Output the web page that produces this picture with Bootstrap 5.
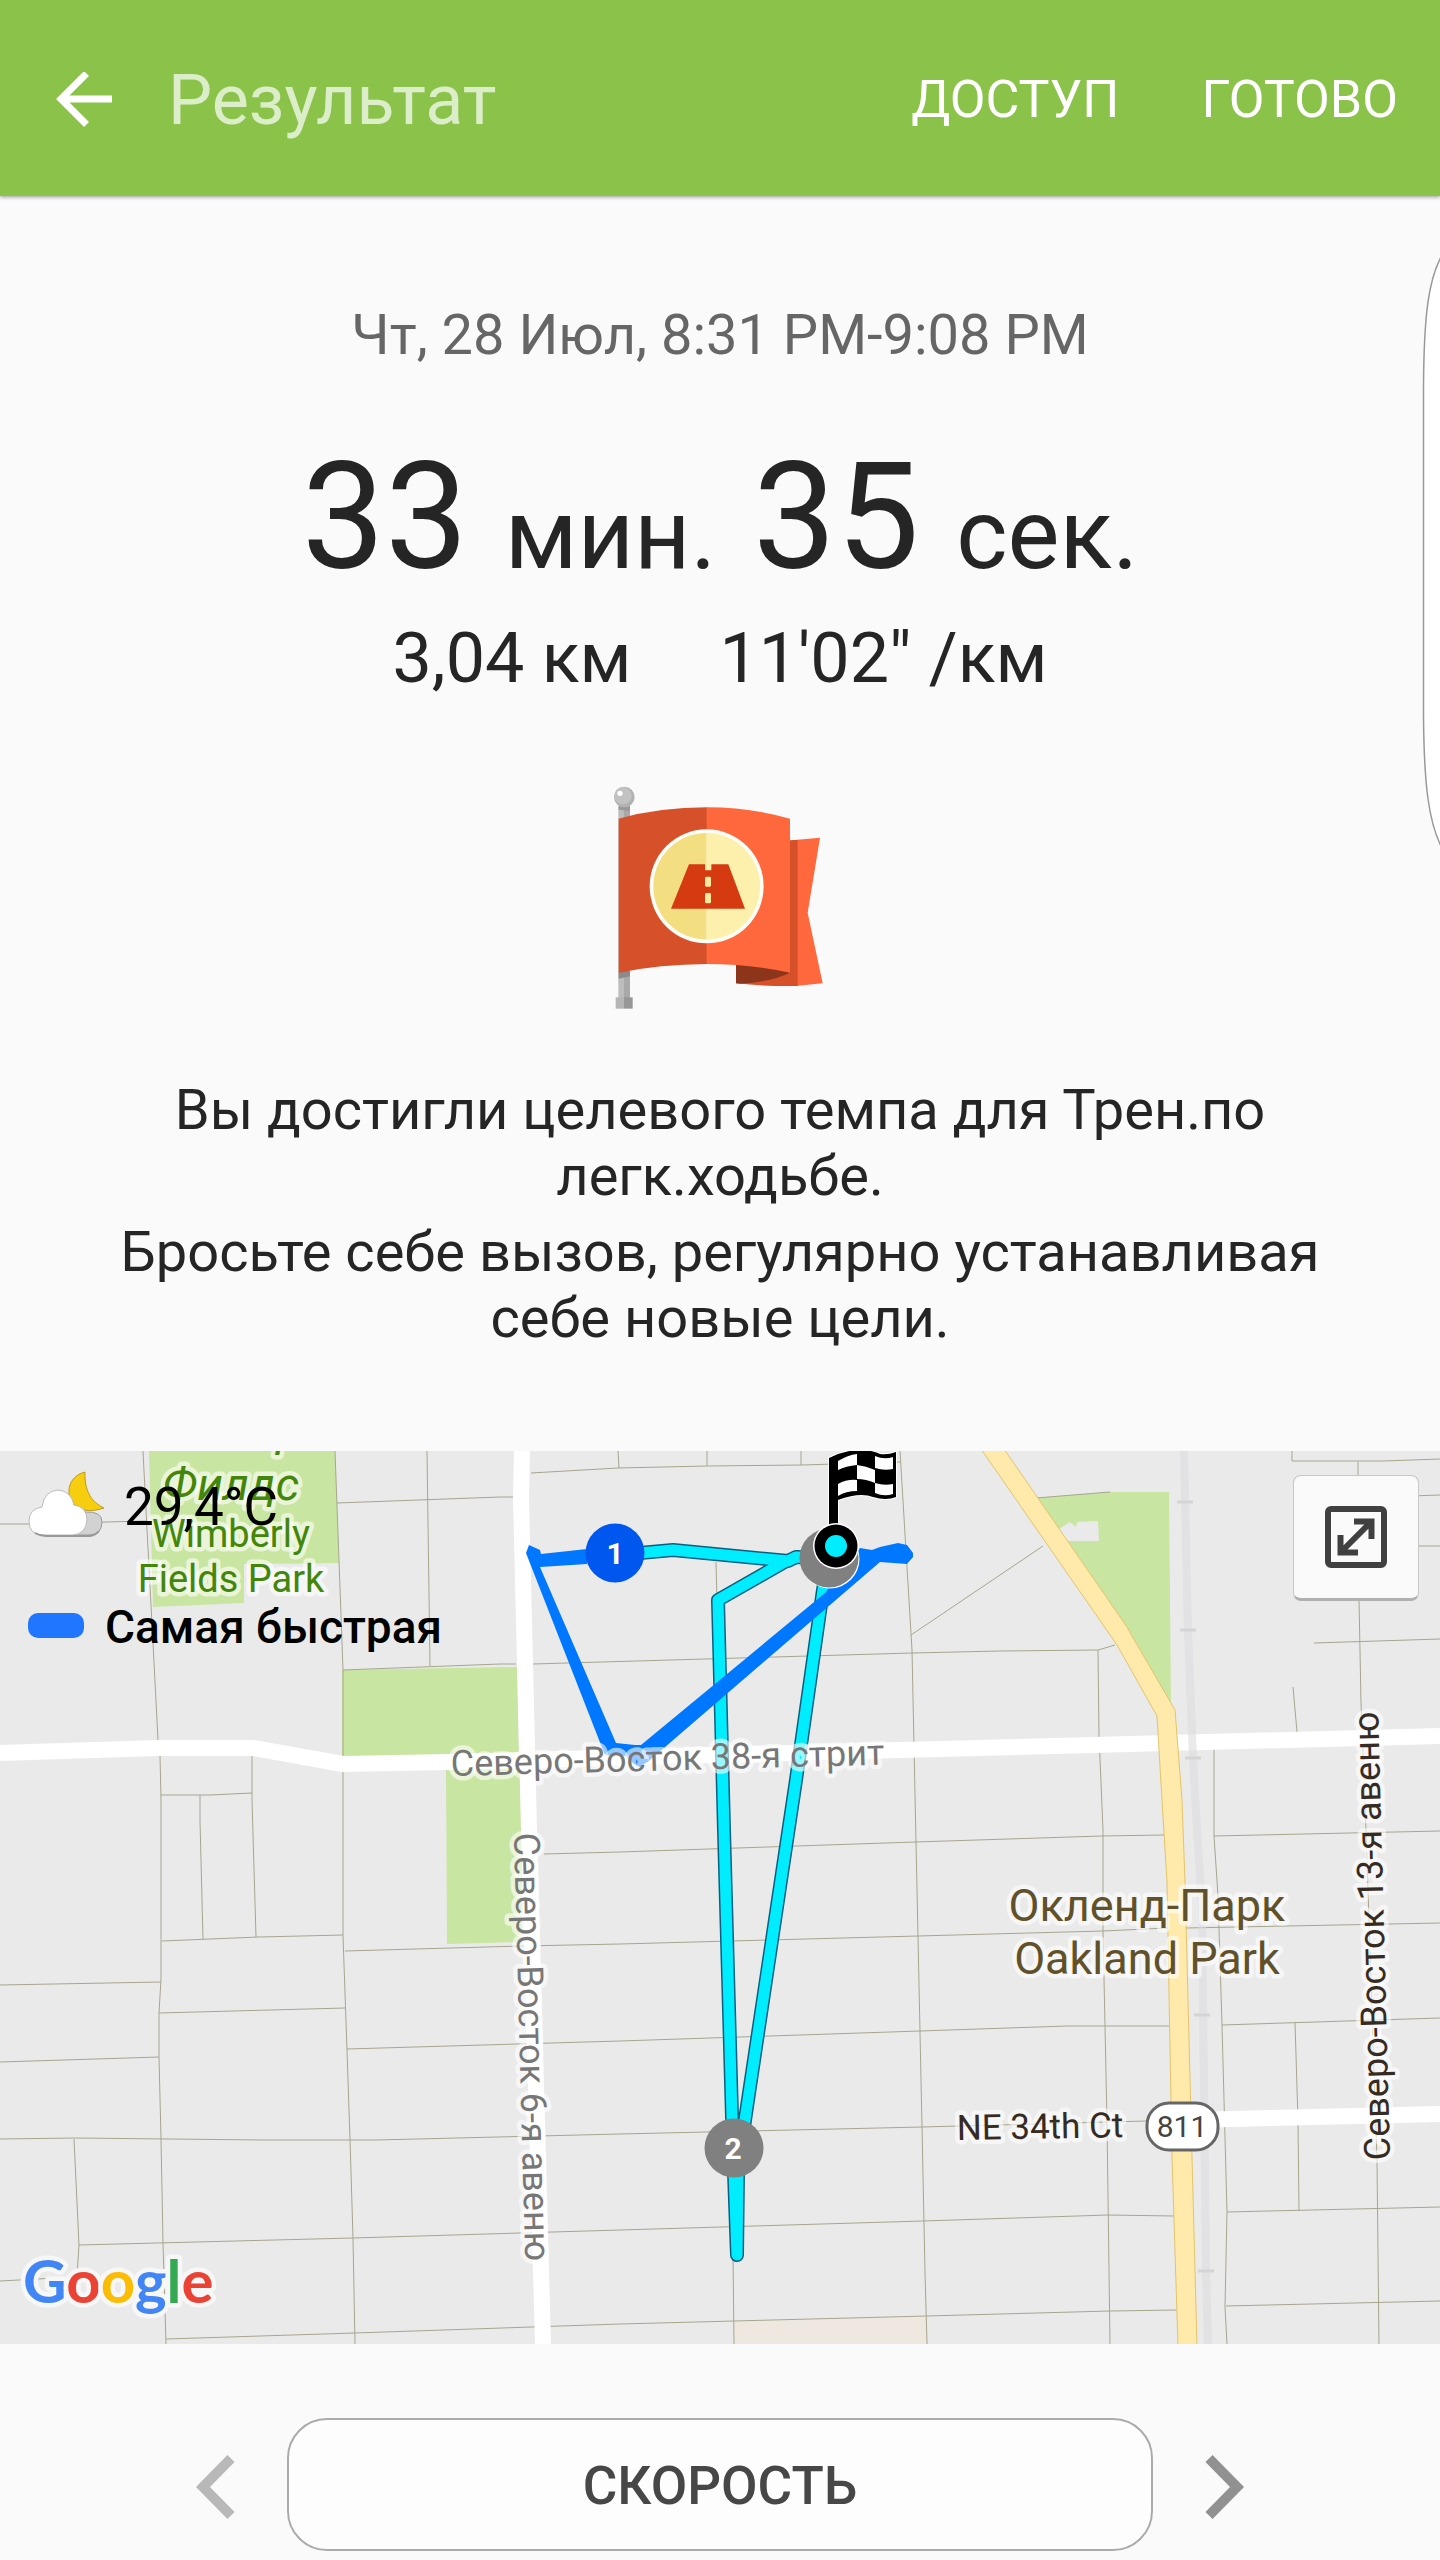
<!DOCTYPE html>
<html lang="ru">
<head>
<meta charset="utf-8">
<meta name="viewport" content="width=device-width, initial-scale=1">
<title>Результат</title>
<link href="https://cdn.jsdelivr.net/npm/bootstrap@5.3.0/dist/css/bootstrap.min.css" rel="stylesheet">
<style>
body{font-family:Roboto,"Noto Sans",sans-serif;background:#fafafa;color:#252525}
.topbar{background:#8bc34a;height:196px;padding:4px 42px 0 56px;box-shadow:0 1px 4px rgba(0,0,0,.4)}
.topbar-title{font-size:70px;line-height:82px;font-weight:400;color:rgba(255,255,255,.7);margin-left:56px}
.topbar-btn{font-size:52px;line-height:62px;color:#fff}
.topbar-actions{gap:82px}
.plain-btn{border:0;background:none;padding:0}
.summary{padding:106px 100px 100px}
.when{font-size:56px;line-height:66px;color:#666}
.duration{font-size:148px;line-height:174px;margin-top:63px;font-weight:400}
.duration .unit{font-size:98px;line-height:100px}
.stats{font-size:70px;line-height:82px;margin-top:12px;gap:88px}
.award{margin-top:84px;margin-bottom:64px}
.message{font-size:56px;line-height:66px}
.message p{margin-bottom:10px}
.message p:last-child{margin-bottom:0}
.edge-handle{top:256px;right:0}
.route-map svg.canvas text{font-family:Roboto,"Noto Sans",sans-serif}
.halo{paint-order:stroke;stroke:rgba(255,255,255,.6);stroke-width:9px;stroke-linejoin:round}
.map-info{top:20px;left:28px;color:#000}
.temp{font-size:53px;line-height:62px;margin-left:18px;padding-top:4px}
.weather{height:68px}
.legend{margin-top:57px;font-size:46px;line-height:54px;font-weight:500}
.legend span:last-child{padding-top:4px}
.swatch{width:56px;height:25px;border-radius:10px;background:#2176ff;margin-right:21px}
.expand{top:24px;right:21px;width:126px;height:126px;background:#fafafa;border:1px solid #c8c8c8;border-bottom:3px solid #b0b0b0;border-radius:8px}
.pager{padding:74px 196px 9px}
.pager .plain-btn{padding-top:5px}
.metric{height:133px;margin:0 52px;padding:5px 0 0;border:2px solid #ababab;border-radius:40px;background:#fdfdfd;font-size:53px;font-weight:500;color:#474747}
</style>
</head>
<body>
<header class="topbar d-flex align-items-center justify-content-between position-relative">
  <div class="d-flex align-items-center">
    <button class="plain-btn d-flex" type="button" aria-label="Назад">
      <svg width="56" height="56" viewBox="0 0 56 56" fill="none" stroke="#fff" stroke-width="7"><path d="M30.500 1.500L5 27L30.500 52.500M6 27H56"/></svg>
    </button>
    <h1 class="topbar-title mb-0">Результат</h1>
  </div>
  <div class="topbar-actions d-flex">
    <button class="plain-btn topbar-btn" type="button">ДОСТУП</button>
    <button class="plain-btn topbar-btn" type="button">ГОТОВО</button>
  </div>
</header>

<svg class="edge-handle position-absolute" width="18" height="590" viewBox="0 0 18 590" aria-hidden="true"><path d="M19 1C7 24 2 56 1.500 130V460C2 530 7 566 19 590Z" fill="#fff" stroke="#999" stroke-width="1.500"/></svg>

<main>
<section class="summary text-center">
  <div class="when">Чт, 28 Июл, 8:31 PM-9:08 PM</div>
  <h2 class="duration mb-0">33 <span class="unit">мин.</span> 35 <span class="unit">сек.</span></h2>
  <div class="stats d-flex justify-content-center"><span>3,04 км</span><span>11'02" /км</span></div>
  <svg class="award d-block mx-auto" width="220" height="230" viewBox="150 70 660 690" aria-hidden="true">
    <path d="M175 130H192V720H175Z" fill="#bdbdbd"/><path d="M192 130H210V720H192Z" fill="#a9a9a9"/>
    <path d="M176 140H210V155L176 150Z" fill="#999"/>
    <path d="M176 638L210 632V650L176 657Z" fill="#8b8b8b"/>
    <path d="M167 713H192V747H167Z" fill="#b5b5b5"/><path d="M192 713H218V747H192Z" fill="#979797"/>
    <circle cx="193" cy="112" r="31" fill="#b2b2b2"/><circle cx="189" cy="108" r="26" fill="#c2c2c2"/><circle cx="180" cy="101" r="8" fill="#fff"/>
    <path d="M528 600H690V242L714 240V679Q620 681 528 671Z" fill="#d6502a"/>
    <path d="M528 600H690V639Q630 668 540 672L528 671Z" fill="#8c351b"/>
    <path d="M713 240L780 234L743 459L788 671L713 678Z" fill="#ff673d"/>
    <path d="M176 177Q300 143 441 143V613Q300 614 176 639Z" fill="#d6502a"/>
    <path d="M440 143Q570 143 690 177V639Q570 613 440 613Z" fill="#ff673d"/>
    <circle cx="440" cy="380" r="171" fill="#fffdf5"/>
    <path d="M440 220A160 160 0 0 0 440 540Z" fill="#f3de82"/><path d="M440 220A160 160 0 0 1 440 540Z" fill="#fcf0ac"/>
    <path d="M387 314H435V332H454V314H505L555 447H333Z" fill="#d53a10"/>
    <rect x="435" y="351" width="18" height="30" rx="4" fill="#f9e99d"/><rect x="435" y="400" width="18" height="31" rx="4" fill="#f9e99d"/>
  </svg>
  <div class="message">
    <p>Вы достигли целевого темпа для Трен.по легк.ходьбе.</p>
    <p>Бросьте себе вызов, регулярно устанавливая себе новые цели.</p>
  </div>
</section>

<section class="route-map position-relative overflow-hidden">
<svg class="canvas d-block w-100 h-auto" viewBox="0 0 1440 893" role="img" aria-label="Карта маршрута">
  <rect width="1440" height="893" fill="#eaeaea"/>
  <!-- parks -->
  <g fill="#c9e5a2">
    <path d="M149 0H335L339 112L244 113V152L153 156Z"/>
    <path d="M342 219L517 216L519 312H342Z"/>
    <path d="M446 316H522V491L447 493Z"/>
    <path d="M1036 47L1110 41H1169L1171 253L1130 195Z"/>
  </g>
  <path d="M1059 78L1070 71L1076 76L1077 71L1098 70L1099 90H1067Z" fill="#eaeaea"/>
  <path d="M734 870L927 865V893H734Z" fill="#efe8e0"/>
  <!-- minor streets -->
  <g fill="none" stroke="#a6a68e" stroke-width="1">
    <path d="M143 0L146 59L153 192L158 289M160 304L161 349V528L159 562V606L161 688L163 792L166 893"/>
    <path d="M0 73H28L146 70M335 0L343 219V485L347 599L350 688L353 787L355 893M427 0L430 215M337 52L500 46H513M343 219L500 213H516"/>
    <path d="M252 305V349L256 486M161 344H210L252 342M200 344V370L203 488M162 490L259 486L343 484M0 534L161 531M159 562L345 557M0 611L159 606"/>
    <path d="M0 688L75 687L262 689H376L620 683L922 676L1146 670M74 688L79 794L77 824M79 794L353 787L620 779L923 770L1108 764L1174 765M0 830L75 826"/>
    <path d="M166 888L355 882L620 873L734 870L927 865L1110 860L1177 859M345 500L522 495L620 493L918 485L1103 480L1167 477"/>
    <path d="M347 598L620 590L920 580L1067 575H1169M544 403L620 401L915 391L1102 385L1164 384"/>
    <path d="M531 22L618 17L707 15L802 14L900 11M618 0L619 17M707 0V15M801 0V14M900 0L912 199L916 391L922 676L925 821L927 893"/>
    <path d="M533 213L912 202L1000 200L1098 199L1115 194M716 111L717 150M911 184L1043 95M1036 47L1110 41M1098 199L1099 284L1103 379V480L1107 670L1110 893"/>
    <path d="M1292 0V10H1383L1440 8M1358 11V25M1410 45L1440 44M1410 95H1440M1359 148L1361 252L1366 379L1377 710L1379 893M1314 192L1440 188M1293 236L1297 281"/>
    <path d="M1214 298V385L1218 445L1222 574L1227 761L1225 856L1227 893M1214 385L1440 380M1186 477L1440 472M1222 574L1440 567M1295 571L1298 670L1299 760M1227 761L1440 756M1226 855L1440 850M733 805L734 893"/>
  </g>
  <!-- main roads -->
  <g fill="none" stroke="#fff" stroke-width="16" stroke-linejoin="round">
    <path d="M0 302L158 297H253L343 313L450 311L900 299L1440 285"/>
    <path d="M522 0L521 46L525 212L529 379L543 893M1190 669L1440 663"/>
  </g>
  <path d="M1184 0L1188 179L1193 307L1197 379L1202 456L1206 820L1208 893" fill="none" stroke="#dcdce0" stroke-opacity=".6" stroke-width="8"/>
  <path d="M1177 51H1193M1180 179H1196M1185 307H1201M1194 564H1210M1198 820H1214" stroke="#d4d4d4" stroke-width="3"/>
  <path d="M981 -2L1117 194L1157 265L1162 349L1167 431L1172 706L1178 895H1197L1192 706L1185 431L1182 349L1175 259L1132 185L1127 176L1004 -2Z" fill="#ffe9ab" stroke="#e3c46c" stroke-width="1"/>
  <!-- recorded route -->
  <g fill="none" stroke-linejoin="round">
    <path d="M640 102L673 99L788 110L796 106L830 107M788 109L718 149L724 379L732 666L737 804L738 720L745 669L796 329L823 139L829 107" stroke="#0b5f80" stroke-width="14"/>
    <path d="M640 102L673 99L788 110L796 106L830 107M788 109L718 149L724 379L732 666L737 804L738 720L745 669L796 329L823 139L829 107" stroke="#00ecff" stroke-width="11"/>
  </g>
  <path d="M526 102L529 94L540 99L541 103L587 98V113L540 116L616 292L635 294L641 294L825 142L860 97L872 99L880 96L898 92L907 94L913 102V106L907 113L880 111L650 309L640 316L634 313L625 305L605 304L601 294Z" fill="#0077ff"/>
  <!-- place and street names -->
  <g font-size="38" fill="#43860a" text-anchor="middle">
    <text class="halo" x="222" y="-5" font-size="46" font-style="italic">Уимбер</text>
    <text class="halo" x="231" y="49" font-size="46" font-style="italic">Филдс</text>
    <text class="halo" x="231" y="96">Wimberly</text>
    <text class="halo" x="231" y="141">Fields Park</text>
  </g>
  <g font-size="36" fill="#777">
    <text class="halo" transform="translate(451 325) rotate(-1.500)">Северо-Восток 38-я стрит</text>
    <text class="halo" transform="translate(514 382) rotate(88.500)">Северо-Восток 6-я авеню</text>
  </g>
  <g font-size="36" fill="#352b22">
    <text class="halo" transform="translate(1390 709) rotate(-91.500)">Северо-Восток 13-я авеню</text>
    <text class="halo" transform="translate(957 689) rotate(-1)" font-size="35">NE 34th Ct</text>
  </g>
  <g font-size="45" fill="#61512a" text-anchor="middle">
    <text class="halo" x="1147" y="470">Окленд-Парк</text>
    <text class="halo" x="1147" y="523">Oakland Park</text>
  </g>
  <rect x="1147" y="652" width="71" height="47" rx="22" fill="#fff" stroke="#666" stroke-width="3"/>
  <text x="1182" y="686" font-size="30" fill="#444" text-anchor="middle">811</text>
  <!-- kilometre markers -->
  <circle cx="615" cy="102" r="29.500" fill="#0057f0"/>
  <circle cx="734" cy="697" r="29.500" fill="#808080"/>
  <g font-size="30" font-weight="700" fill="#fff" text-anchor="middle"><text x="615" y="113">1</text><text x="733" y="708">2</text></g>
  <!-- finish flag -->
  <circle cx="830" cy="108" r="29.500" fill="#fff"/><circle cx="829" cy="107" r="29.500" fill="#808080"/>
  <path d="M829 7Q845 -1 860 -1Q872 -1 880 3Q888 4 896 1V46Q886 50 873 46Q860 41 838 49V84H829Z" fill="#000" stroke="#fff" stroke-width="2" paint-order="stroke"/>
  <g fill="#fff"><path d="M838 10Q848 4 857 3V14Q846 15 838 19ZM875 5Q884 9 893 6V18Q884 20 875 17ZM857 14Q866 15 875 19V32Q866 28 857 28ZM838 33Q847 28 857 29V40Q846 40 838 45ZM875 32Q884 35 893 33V43Q884 46 875 42Z"/></g>
  <circle cx="836" cy="95" r="23" fill="#fff"/><circle cx="836" cy="95" r="21.500"/><circle cx="836" cy="95" r="11" fill="#00ecff"/>
  <!-- map provider -->
  <text x="23" y="852" font-size="60" style="font-family:Lato,sans-serif;stroke:#f7f7f7" font-weight="700" class="halo"><tspan fill="#4285f4">G</tspan><tspan fill="#ea4335">o</tspan><tspan fill="#fbbc05">o</tspan><tspan fill="#4285f4">g</tspan><tspan fill="#34a853">l</tspan><tspan fill="#ea4335">e</tspan></text>
</svg>

<div class="map-info position-absolute">
  <div class="weather d-flex align-items-center">
    <svg width="78" height="68" viewBox="0 0 78 68" aria-hidden="true">
      <path d="M57 1C42 5 39 18 42 27C47 38 57 43 76 37C68 33 56 25 57 1Z" fill="#f7cd10" stroke="#b99a20" stroke-width="1"/>
      <path d="M45 62C53 57 58 49 57 41Q74 40 74 51Q74 64 60 64H46Z" fill="#d2d2d2" stroke="#999" stroke-width="1"/>
      <path d="M15 64Q1 64 1 50Q1 38 14 36Q16 20 30 19Q43 20 46 34Q59 36 59 49Q58 63 45 64Z" fill="#fff" stroke="#bbb" stroke-width="1"/>
      <path d="M7 62Q12 65 18 65H62Q68 64 71 60" fill="none" stroke="#999" stroke-width="2"/>
    </svg>
    <span class="temp">29,4°C</span>
  </div>
  <div class="legend d-flex align-items-center"><span class="swatch"></span><span>Самая быстрая</span></div>
</div>
<button class="expand position-absolute d-flex align-items-center justify-content-center p-0" type="button" aria-label="Развернуть карту">
  <svg width="62" height="62" viewBox="0 0 62 62" fill="none" stroke="#404040" stroke-width="6"><rect x="3" y="3" width="56" height="56" rx="3"/><path d="M29 15.500H46.500V33M15.500 29V46.500H33M45 17L17 45"/></svg>
</button>
</section>

<nav class="pager d-flex align-items-center" aria-label="Показатели">
  <button class="plain-btn d-flex" type="button" aria-label="Предыдущий"><svg width="39" height="64" viewBox="0 0 39 64" fill="none" stroke="#b8b8b8" stroke-width="10"><path d="M35 3.500L7 32L35 60.500"/></svg></button>
  <button class="metric flex-grow-1" type="button">СКОРОСТЬ</button>
  <button class="plain-btn d-flex" type="button" aria-label="Следующий"><svg width="39" height="64" viewBox="0 0 39 64" fill="none" stroke="#919191" stroke-width="10"><path d="M4 3.500L32 32L4 60.500"/></svg></button>
</nav>
</main>
<script src="https://cdn.jsdelivr.net/npm/bootstrap@5.3.0/dist/js/bootstrap.bundle.min.js"></script>
</body>
</html>
